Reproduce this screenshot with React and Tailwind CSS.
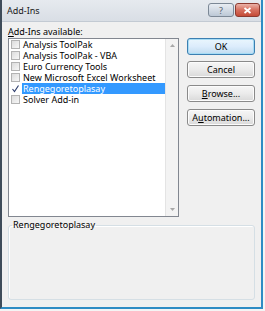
import React from 'react';

const ITEMS = [
  { name: 'Analysis ToolPak', checked: false },
  { name: 'Analysis ToolPak - VBA', checked: false },
  { name: 'Euro Currency Tools', checked: false },
  { name: 'New Microsoft Excel Worksheet', checked: false },
  { name: 'Rengegoretoplasay', checked: true, selected: true },
  { name: 'Solver Add-in', checked: false },
];

const font = { fontFamily: '"Noto Sans", "Open Sans", sans-serif' };

function CheckBox({ checked }) {
  if (checked) {
    return (
      <svg width="9" height="9" viewBox="0 0 9 9" className="shrink-0">
        <path d="M1.5 5 L3.5 7.5 L7.5 1.5" fill="none" stroke="#2a3a6a" strokeWidth="1.1" />
      </svg>
    );
  }
  return (
    <span className="w-[9px] h-[9px] shrink-0 border border-[#b3b3b3] bg-gradient-to-br from-[#dcdcdc] to-[#f7f7f7]" />
  );
}

function DlgButton({ children, primary, className = '' }) {
  return (
    <button
      className={
        'h-[17px] w-[68px] rounded-[3px] border text-[9px] leading-none text-black flex items-center justify-center bg-gradient-to-b ' +
        (primary
          ? 'border-[#3c7fb1] from-[#eaf6fd] via-[#dcecfc] to-[#c0dcf0] shadow-[inset_0_0_0_1px_#a6dcf5] '
          : 'border-[#8a8a8a] from-[#f6f6f6] via-[#ebebeb] to-[#d9d9d9] shadow-[inset_0_0_0_1px_#fcfcfc] ') +
        className
      }
    >
      {children}
    </button>
  );
}

export default function App() {
  return (
    <div className="w-[265px] h-[311px] bg-[#f4f4f4]" style={font}>
      <div className="w-[263px] h-[309px] flex flex-col bg-[#dfe4ea] border-l-2 border-l-[#3f4c5a] border-r-2 border-r-[#2e8cc4] border-b-2 border-b-[#2e8cc4]">
        {/* title bar */}
        <div className="h-[22px] shrink-0 flex items-start justify-between bg-gradient-to-b from-[#e6eaef] to-[#d9dee5] border-b border-[#c3cad3]">
          <span className="pl-[5px] pt-[5px] text-[9px] leading-[11px] text-[#1a1a1a]">Add-Ins</span>
          <div className="flex gap-[1px] pt-[3px] pr-[1px]">
            <div className="w-[26px] h-[14px] rounded-[3px] border border-[#7c8896] bg-gradient-to-b from-[#e8edf3] via-[#d3dbe5] to-[#bcc8d6] flex items-center justify-center text-[9px] leading-none text-[#55606d]">?</div>
            <div className="w-[25px] h-[14px] rounded-[3px] border border-[#8c3a30] bg-gradient-to-b from-[#eab2a8] via-[#d66f5f] to-[#c44a36] flex items-center justify-center">
              <svg width="9" height="7" viewBox="0 0 9 7">
                <path d="M1.5 1 L7.5 6 M7.5 1 L1.5 6" stroke="#fff" strokeWidth="1.8" />
              </svg>
            </div>
          </div>
        </div>

        {/* client */}
        <div className="flex-1 bg-[#f0f0f0] pl-[6px] pr-[6px] pt-[4px] flex flex-col">
          <div className="h-[12px] text-[9px] leading-[12px] text-black">
            <span className="underline">A</span>dd-Ins available:
          </div>

          <div className="flex gap-[8px]">
            <div className="w-[171px] h-[179px] border border-[#828790] bg-white flex">
              <ul className="flex-1 overflow-hidden">
                {ITEMS.map((it) => (
                  <li key={it.name} className="h-[11px] flex items-center pl-[2px] gap-[2px]">
                    <CheckBox checked={it.checked} />
                    <span
                      className={
                        'flex-1 h-[11px] pl-[1px] text-[9px] leading-[11px] whitespace-nowrap overflow-hidden ' +
                        (it.selected ? 'bg-[#3399ff] text-white' : 'text-black')
                      }
                    >
                      {it.name}
                    </span>
                  </li>
                ))}
              </ul>
              <div className="w-[13px] bg-[#f3f3f3] border-l border-[#e4e4e4] flex flex-col items-center justify-between py-[5px]">
                <svg width="5" height="3" viewBox="0 0 5 3"><path d="M0 3 L2.5 0 L5 3 Z" fill="#a8a8a8" /></svg>
                <svg width="5" height="3" viewBox="0 0 5 3"><path d="M0 0 L2.5 3 L5 0 Z" fill="#a8a8a8" /></svg>
              </div>
            </div>

            <div className="flex flex-col">
              <DlgButton primary>OK</DlgButton>
              <DlgButton className="mt-[6px]">Cancel</DlgButton>
              <DlgButton className="mt-[7px]"><span className="underline">B</span>rowse...</DlgButton>
              <DlgButton className="mt-[7px]">A<span className="underline">u</span>tomation...</DlgButton>
            </div>
          </div>

          <fieldset className="mt-[2px] h-[81px] border border-[#d5dfe5] rounded-[3px] shadow-[inset_1px_1px_0_#ffffff] px-[3px]">
            <legend className="px-[1px] text-[9px] leading-[12px] text-black">Rengegoretoplasay</legend>
          </fieldset>
        </div>
      </div>
    </div>
  );
}
